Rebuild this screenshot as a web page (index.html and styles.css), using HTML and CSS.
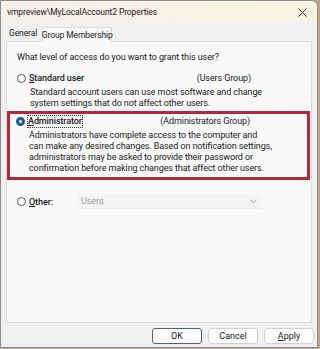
FILE: index.html
```html
<!DOCTYPE html>
<html>
<head>
<meta charset="utf-8">
<link rel="stylesheet" href="styles.css">
</head>
<body>
<div class="window">
  <div class="titlebar">
    <span class="title">vmpreview\MyLocalAccount2 Properties</span>
    <svg class="close" width="9" height="9" viewBox="0 0 9 9"><path d="M0.5 0.5L8.5 8.5M8.5 0.5L0.5 8.5" stroke="#333" stroke-width="1"/></svg>
  </div>
  <div class="tabs">
    <span class="tab">General</span>
    <span class="tab active">Group Membership</span>
  </div>
  <div class="panel">
    <p class="question">What level of access do you want to grant this user?</p>
    <div class="option std">
      <div class="opt-head">
        <span class="radio"></span>
        <span class="label"><u>S</u>tandard user</span>
        <span class="group">(Users Group)</span>
      </div>
      <p class="desc">Standard account users can use most software and change<br>system settings that do not affect other users.</p>
    </div>
    <div class="option admin">
      <div class="opt-head">
        <span class="radio checked"></span>
        <span class="label focus"><u>A</u>dministrator</span>
        <span class="group">(Administrators Group)</span>
      </div>
      <p class="desc">Administrators have complete access to the computer and<br>can make any desired changes. Based on notification settings,<br>administrators may be asked to provide their password or<br>confirmation before making changes that affect other users.</p>
    </div>
    <div class="other">
      <span class="radio"></span>
      <span class="label"><u>O</u>ther:</span>
      <div class="combo">
        <span>Users</span>
        <svg width="7" height="5" viewBox="0 0 7 5"><path d="M0.5 0.8L3.5 3.8L6.5 0.8" stroke="#999" fill="none" stroke-width="1"/></svg>
      </div>
    </div>
  </div>
  <div class="footer">
    <button class="btn default">OK</button>
    <button class="btn">Cancel</button>
    <button class="btn"><u>A</u>pply</button>
  </div>
</div>
</body>
</html>
```
FILE: styles.css
```css
html, body {
  margin: 0;
  padding: 0;
  background: #b9a68a;
}
body {
  width: 320px;
  height: 349px;
  overflow: hidden;
  font-family: Roboto, "Noto Sans", sans-serif;
  font-size: 9px;
  letter-spacing: -0.1px;
  color: #1a1a1a;
}
.window {
  box-sizing: border-box;
  width: 318px;
  height: 348px;
  border: 1px solid #8c8c8c;
  border-top-right-radius: 7px;
  background: #f0f0f0;
  display: flex;
  flex-direction: column;
  overflow: hidden;
}
.titlebar {
  height: 22px;
  flex: none;
  display: flex;
  align-items: center;
  justify-content: space-between;
  padding: 0 10px 0 6px;
  background: linear-gradient(to right, #f4f0ea, #fbf2e2);
  font-size: 8.5px;
  color: #222;
}
.tabs {
  height: 18px;
  flex: none;
  display: flex;
  align-items: flex-end;
  padding-left: 5px;
  position: relative;
  z-index: 1;
  white-space: nowrap;
  font-size: 8.5px;
}
.tab {
  padding: 0 3px 3px 3px;
  height: 14px;
  box-sizing: border-box;
  display: flex;
  align-items: center;
  color: #222;
}
.tab.active {
  margin-left: 2px;
  width: 70px;
  justify-content: center;
  height: 15px;
  padding: 0 0 1px 0;
  background: #f9f9f9;
  border: 1px solid #dcdcdc;
  border-bottom: none;
  margin-bottom: -1px;
}
.panel {
  flex: none;
  height: 282px;
  box-sizing: border-box;
  margin: 0 5px 0 5px;
  background: #f9f9f9;
  border: 1px solid #dcdcdc;
  padding: 10px 0 0 0;
  display: flex;
  flex-direction: column;
  white-space: nowrap;
}
.question {
  margin: 0 0 10px 10px;
  line-height: 11px;
}
.opt-head {
  display: flex;
  align-items: center;
  width: 234px;
  height: 11px;
  line-height: 11px;
}
.std {
  padding-left: 10px;
  margin-bottom: 3px;
}
.admin {
  margin: 0 1px 0 0;
  border: 3px solid #b3283a;
  padding: 2px 0 0 6px;
  height: 69px;
  box-sizing: border-box;
}
.radio {
  width: 9px;
  height: 9px;
  box-sizing: border-box;
  border: 1px solid #555;
  border-radius: 50%;
  background: #fff;
  margin-right: 3px;
  flex: none;
}
.radio.checked {
  border: 3px solid #1d5a8e;
}
.label {
  font-weight: 500;
  flex: none;
}
.label.focus {
  outline: 1px dotted #333;
  outline-offset: 0;
}
.group {
  margin-left: auto;
}
.desc {
  margin: 3px 0 0 13px;
  line-height: 10.7px;
}
.other {
  display: flex;
  align-items: center;
  margin: 14px 0 0 10px;
}
.combo {
  margin-left: 25px;
  width: 184px;
  height: 15px;
  box-sizing: border-box;
  background: #f4f4f4;
  border-bottom: 1px solid #ececec;
  display: flex;
  align-items: center;
  justify-content: space-between;
  padding: 0 5px 0 3px;
  color: #9a9a9a;
}
.footer {
  flex: 1;
  display: flex;
  justify-content: flex-end;
  align-items: flex-start;
  gap: 6px;
  padding: 5px 3px 0 0;
}
.btn {
  width: 50px;
  height: 16px;
  box-sizing: border-box;
  border: 1px solid #d0d0d0;
  border-radius: 3px;
  background: #fdfdfd;
  font-family: inherit;
  font-size: 9px;
  color: #222;
  padding: 0;
  line-height: 14px;
}
.btn.default {
  border-color: #4d6478;
}
u {
  text-underline-offset: 1px;
}
```
